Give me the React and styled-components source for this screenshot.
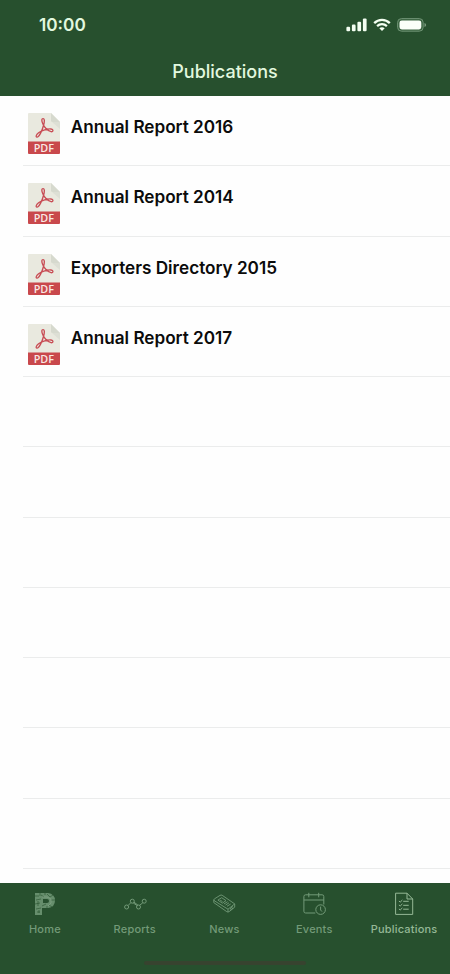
import React from "react";
import styled, { createGlobalStyle } from "styled-components";

const publications = [
  "Annual Report 2016",
  "Annual Report 2014",
  "Exporters Directory 2015",
  "Annual Report 2017",
];

const emptyRows = [0, 1, 2, 3, 4, 5, 6];

const SignalIcon = () => (
  <svg width="21" height="14" viewBox="0 0 21 14" fill="#f4fff2">
    <rect x="0.4" y="8.8" width="3.7" height="4.5" rx="1.1" />
    <rect x="5.9" y="6.6" width="3.7" height="6.7" rx="1.1" />
    <rect x="11.4" y="3.7" width="3.7" height="9.6" rx="1.1" />
    <rect x="16.9" y="0.4" width="3.7" height="12.9" rx="1.1" />
  </svg>
);

const WifiIcon = () => (
  <svg width="18" height="14" viewBox="0 0 18 14" fill="none">
    <path d="M1.2 5.1C5.6 0.7 12.4 0.7 16.8 5.1" stroke="#f4fff2" strokeWidth="2.3" />
    <path d="M4.1 8.1C6.9 5.4 11.1 5.4 13.9 8.1" stroke="#f4fff2" strokeWidth="2.2" />
    <path d="M6.3 10.3C7.9 8.9 10.1 8.9 11.7 10.3L9 13.1Z" fill="#f4fff2" />
  </svg>
);

const BatteryIcon = () => (
  <svg width="30" height="14" viewBox="0 0 30 14">
    <rect x="0.6" y="0.6" width="25.6" height="12.6" rx="3.9" fill="#3b6441" stroke="#6f9374" />
    <rect x="2.5" y="2.4" width="21.8" height="9" rx="2.3" fill="#fbfff9" />
    <path d="M27.5 4.9Q29.1 5.4 29.1 6.9T27.5 8.9Z" fill="#80a084" />
  </svg>
);

const PdfIcon = () => (
  <svg width="32" height="42" viewBox="0 0 32 42">
    <path d="M1 0H23L32 9V29H0V1Q0 0 1 0Z" fill="#e9e9df" />
    <path d="M23 0L32 9H24.5Q23 9 23 7.5Z" fill="#d6d9ce" />
    <path d="M24 9H32V16Z" fill="#dddfd5" />
    <path
      d="M15.2 5.6C13.5 5.4 13.4 7.8 14.8 10.7C16.3 14.2 19.8 18.2 23 18.7C25.6 19 25.6 16.4 23 16C19.6 15.6 13.8 17.5 10.6 19.8C8.1 21.7 7.5 24 9 24.1C11.1 24.2 14.3 17.2 15.5 12.5C16.7 8.3 16.7 5.8 15.2 5.6Z"
      fill="none"
      stroke="#c84d55"
      strokeWidth="1.35"
    />
    <path d="M0 28.5H32V40Q32 41 31 41H1Q0 41 0 40Z" fill="#c9484c" />
    <text
      x="15.8"
      y="38.8"
      textAnchor="middle"
      fontFamily="Open Sans, sans-serif"
      fontSize="10.8"
      fontWeight="600"
      fill="#f9e9e4"
    >
      PDF
    </text>
  </svg>
);

const HomeIcon = () => (
  <svg width="24" height="24" viewBox="0 0 24 24">
    <path
      d="M2 1H15Q22 2 22 8.5Q22 15 15 16H9V23H2Z M10 7V11H14Q16 11 16 9T14 7Z"
      fill="#668e6c"
      fillRule="evenodd"
    />
    <path
      d="M2 4H6M8 3L11 5M14 2L17 5L20 3M3 8L8 7M18 8H22M2 12L7 11M9 14L13 12M16 13L19 15M3 17L8 16M4 20H7M7 1V4M12 1V3M5 9V14M14 14V16M6 18V21"
      fill="none"
      stroke="#27502e"
      strokeWidth="0.6"
    />
    <path d="M9 5H14L18 7V11L15 14" fill="none" stroke="#8aaa8d" strokeWidth="0.6" />
  </svg>
);

const ReportsIcon = () => (
  <svg width="24" height="24" viewBox="0 0 24 24" fill="none" stroke="currentColor" strokeWidth="1">
    <circle cx="3.6" cy="15" r="2" />
    <circle cx="9.3" cy="9.2" r="2" />
    <circle cx="15.5" cy="15" r="2" />
    <circle cx="21.2" cy="9.2" r="2" />
    <path d="M5 13.6L7.9 10.6M10.3 11L14.2 13.6M10.9 10.1L14.9 13.1M16.6 13.3L19.8 10.8" />
  </svg>
);

const NewsIcon = () => (
  <svg
    width="24"
    height="24"
    viewBox="0 0 24 24"
    fill="none"
    stroke="currentColor"
    strokeWidth="0.9"
    strokeLinejoin="round"
  >
    <path d="M10.2 3.3L22.7 11.9L16 17.2L2.4 8.8Q1.2 7.8 2.4 6.9L8 3.4Q9.1 2.7 10.2 3.3Z" />
    <path d="M1.8 8V10.6L14.8 19.7Q16 20.5 17.2 19.6L22.7 15.2V11.9M16 17.2V20M17.9 16.9L21 14.4M17.9 18.5L21.2 16" />
    <path d="M5.9 8.1L9.7 5.7L14 8.6L10.3 11.2ZM8.2 8.2L10.5 9.6M11.9 12L15.6 9.7M13.5 13.1L17 10.8M15 14.3L18.7 12" />
  </svg>
);

const EventsIcon = () => (
  <svg width="24" height="24" viewBox="0 0 24 24" fill="none" stroke="currentColor" strokeWidth="1">
    <path d="M13.3 21H3.6Q1.9 21 1.9 19.3V4.5Q1.9 2.8 3.6 2.8H20.1Q21.8 2.8 21.8 4.5V12.5M1.9 8H21.8" />
    <path d="M6.8 0.8V5.3M16.7 0.8V5.3" />
    <circle cx="18.6" cy="17.6" r="4.8" />
    <path d="M18.6 14.6V18L20 19.6" />
  </svg>
);

const PublicationsIcon = () => (
  <svg width="24" height="24" viewBox="0 0 24 24" fill="none" stroke="currentColor" strokeWidth="1">
    <path d="M3.6 1.2H15L20.7 7V22.4H3.6ZM15 1.2V7H20.7" />
    <path d="M6.9 9.1L8.3 10L10.4 8M11.2 9.3H16.7M6.9 13L8.3 13.9L10.4 11.9M11.2 13.3H16.7M6.9 17L8.3 17.9L10.4 15.9M11.2 17.2H16.7" />
  </svg>
);

const tabs = [
  { label: "Home", Icon: HomeIcon },
  { label: "Reports", Icon: ReportsIcon },
  { label: "News", Icon: NewsIcon },
  { label: "Events", Icon: EventsIcon },
  { label: "Publications", Icon: PublicationsIcon, active: true },
];

const App = () => {
  return (
    <Screen>
      <GlobalStyle />
      <Header>
        <StatusBar>
          <Time>10:00</Time>
          <StatusIcons>
            <SignalIcon />
            <WifiIcon />
            <BatteryIcon />
          </StatusIcons>
        </StatusBar>
        <Title>Publications</Title>
      </Header>
      <List>
        {publications.map((name) => (
          <Row key={name}>
            <PdfIcon />
            <Name>{name}</Name>
          </Row>
        ))}
        {emptyRows.map((row) => (
          <Row key={row} />
        ))}
      </List>
      <TabBar>
        <Tabs>
          {tabs.map(({ label, Icon, active }) => (
            <Tab key={label} $active={active}>
              <Icon />
              <TabLabel>{label}</TabLabel>
            </Tab>
          ))}
        </Tabs>
        <HomeIndicator />
      </TabBar>
    </Screen>
  );
};

const GlobalStyle = createGlobalStyle`
  body {
    margin: 0;
    background: #fefefe;
  }
`;

const Screen = styled.div`
  display: flex;
  flex-direction: column;
  width: 450px;
  height: 974px;
  overflow: hidden;
  background: #fefefe;
  font-family: Inter, "Liberation Sans", sans-serif;
`;

const Header = styled.header`
  flex: none;
  height: 96px;
  background: #27502e;
  color: #e2f8df;
`;

const StatusBar = styled.div`
  display: flex;
  justify-content: space-between;
  align-items: center;
  height: 50px;
  padding: 0 23px 0 39px;
  box-sizing: border-box;
`;

const Time = styled.span`
  font-size: 17.2px;
  font-weight: 600;
  line-height: 20px;
  padding-bottom: 1px;
`;

const StatusIcons = styled.div`
  display: flex;
  align-items: center;
  gap: 6px;
`;

const Title = styled.h1`
  margin: 0;
  font-size: 18px;
  font-weight: 550;
  line-height: 44px;
  text-align: center;
`;

const List = styled.ul`
  flex: 1;
  min-height: 0;
  margin: 0;
  padding: 0 0 0 23px;
  list-style: none;
  overflow: hidden;
`;

const Row = styled.li`
  display: flex;
  gap: 11px;
  height: 70.25px;
  padding: 17px 0 0 4.8px;
  box-sizing: border-box;
  border-bottom: 1px solid #ebecec;
`;

const Name = styled.span`
  font-size: 17.15px;
  font-weight: 600;
  line-height: 28px;
  color: #0b0b0b;
`;

const TabBar = styled.footer`
  display: flex;
  flex-direction: column;
  align-items: center;
  justify-content: space-between;
  flex: none;
  height: 91px;
  padding: 9px 0;
  box-sizing: border-box;
  background: #27502e;
`;

const Tabs = styled.nav`
  display: grid;
  grid-template-columns: repeat(5, 89.8px);
  width: 449px;
  margin-right: 1px;
`;

const Tab = styled.div`
  display: flex;
  flex-direction: column;
  align-items: center;
  gap: 6px;
  color: ${(props) => (props.$active ? "#95b896" : "#739a78")};
`;

const TabLabel = styled.span`
  font-size: 11px;
  font-weight: 500;
  line-height: 14px;
  letter-spacing: 0.2px;
`;

const HomeIndicator = styled.div`
  width: 162px;
  height: 4px;
  border-radius: 2px;
  background: #37432f;
`;

export default App;
